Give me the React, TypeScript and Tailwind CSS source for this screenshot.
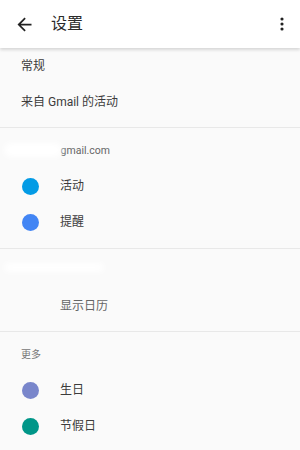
import React from "react";

const font = { fontFamily: 'Roboto, "Noto Sans CJK SC", sans-serif' };

function Dot({ color }: { color: string }) {
  return <span className={`w-[17px] h-[17px] rounded-full shrink-0 ${color}`} />;
}

function CalRow({ color, label }: { color: string; label: string }) {
  return (
    <div className="h-9 flex items-center pl-[22px]">
      <Dot color={color} />
      <span className="ml-[21px] text-[12px] text-[#3c3c3c]">{label}</span>
    </div>
  );
}

export default function App() {
  return (
    <div className="w-[300px] h-[450px] bg-[#fafafa] overflow-hidden relative" style={font}>
      {/* Toolbar */}
      <div className="h-12 bg-white flex items-center relative z-10 shadow-[0_2px_3px_rgba(0,0,0,0.14)]">
        <svg width="21" height="21" viewBox="0 0 24 24" className="ml-[14px] text-[#222]" fill="currentColor">
          <path d="M20 11H7.83l5.59-5.59L12 4l-8 8 8 8 1.41-1.41L7.83 13H20v-2z" />
        </svg>
        <span className="ml-[16px] text-[16px] text-[#2a2a2a]">设置</span>
        <svg width="20" height="20" viewBox="0 0 24 24" className="ml-auto mr-[8px] text-[#222]" fill="currentColor">
          <circle cx="12" cy="6" r="1.9" />
          <circle cx="12" cy="12" r="1.9" />
          <circle cx="12" cy="18" r="1.9" />
        </svg>
      </div>

      {/* General */}
      <div className="pb-[7px] border-b border-[#e8e8e8]">
        <div className="h-9 flex items-center pl-[21px] text-[12px] text-[#3c3c3c]">常规</div>
        <div className="h-9 flex items-center pl-[21px] text-[12px] text-[#3c3c3c]">来自 Gmail 的活动</div>
      </div>

      {/* Account */}
      <div className="pb-2 border-b border-[#e8e8e8]">
        <div className="h-10 pt-4 pl-[21px] relative">
          <span className="block leading-[14px] text-[10.5px] text-[#666] pl-[37px]">&nbsp;gmail.com</span>
          <div className="absolute left-[4px] top-[15px] w-[58px] h-[14px] bg-white blur-[3px] rounded-full" />
        </div>
        <CalRow color="bg-[#039be5]" label="活动" />
        <CalRow color="bg-[#4285f4]" label="提醒" />
      </div>

      {/* Other account */}
      <div className="pb-[7px] border-b border-[#e8e8e8]">
        <div className="h-[39px] relative">
          <div className="absolute left-[4px] top-[14px] w-[100px] h-[9px] bg-white blur-[3px] rounded-full" />
        </div>
        <div className="h-9 flex items-center pl-[60px] text-[12px] text-[#666]">显示日历</div>
      </div>

      {/* More */}
      <div>
        <div className="h-10 pt-4 pl-[21px]">
          <span className="block leading-[14px] text-[10px] text-[#777]">更多</span>
        </div>
        <CalRow color="bg-[#7986cb]" label="生日" />
        <CalRow color="bg-[#009688]" label="节假日" />
      </div>
    </div>
  );
}
